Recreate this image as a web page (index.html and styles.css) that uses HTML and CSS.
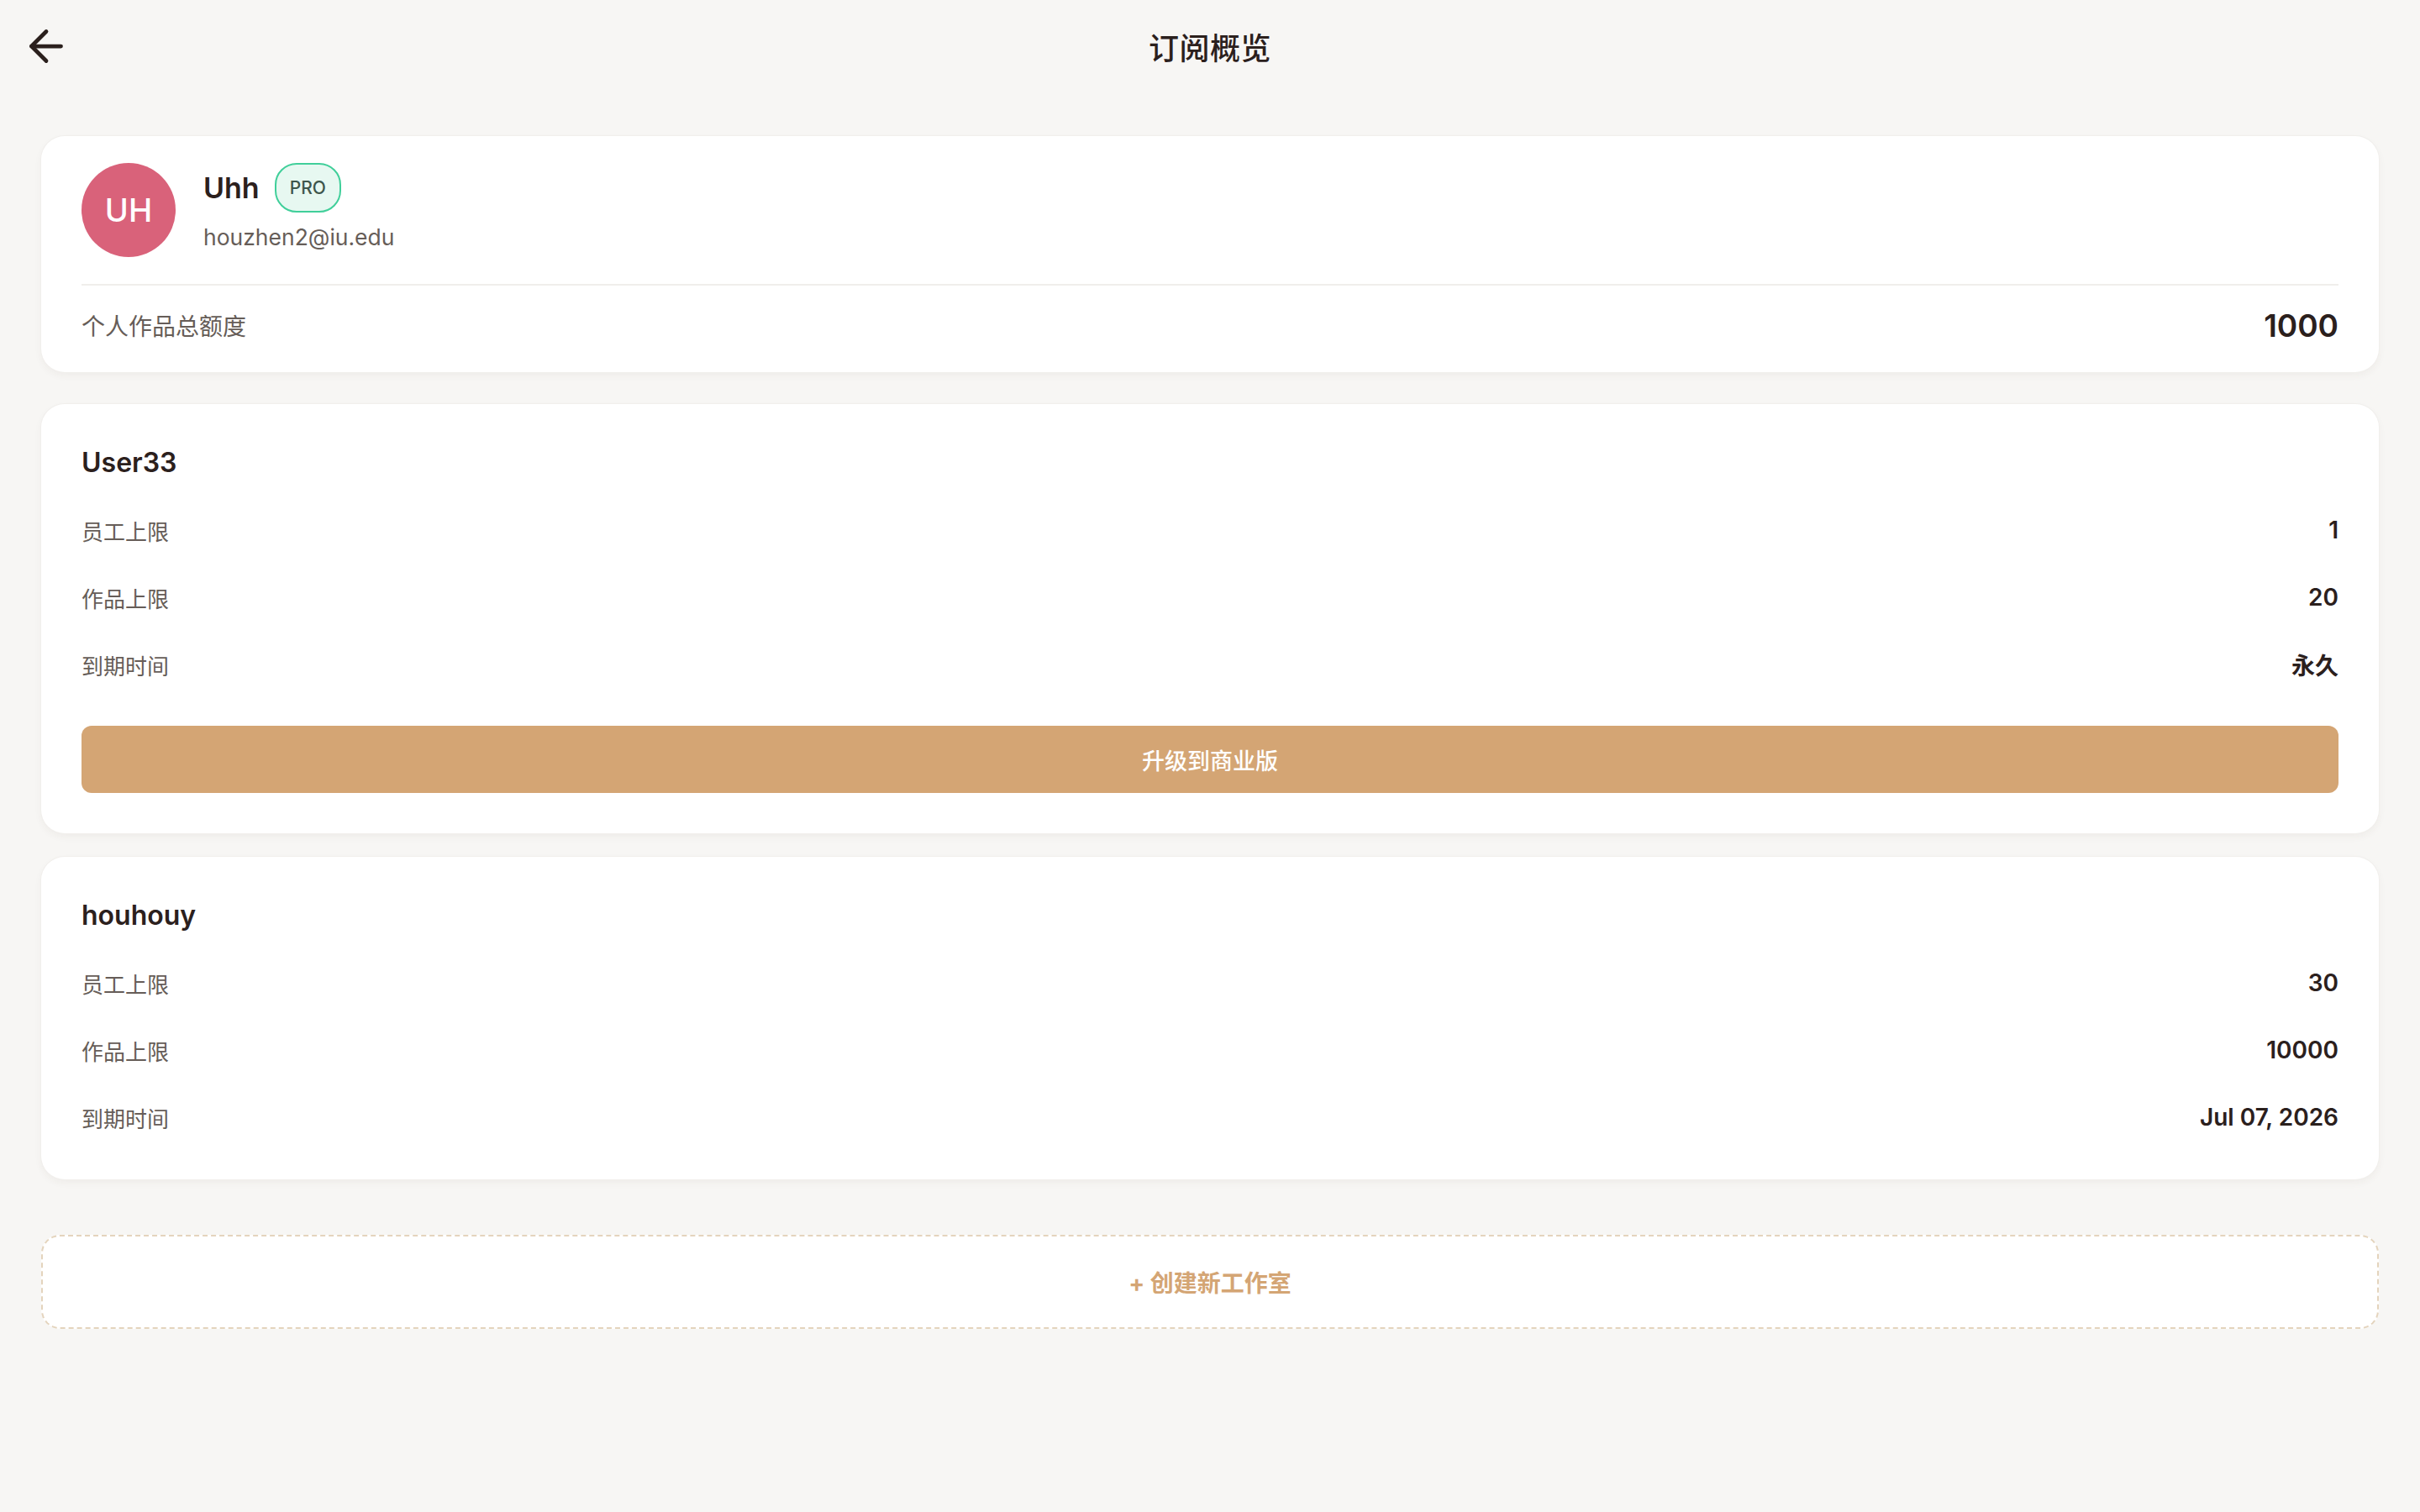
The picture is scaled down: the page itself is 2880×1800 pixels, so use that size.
FILE: index.html
```html
<html lang="zh-CN">
<head>
    <meta charset="UTF-8">
    <meta name="viewport" content="width=device-width, initial-scale=1.0">
    <title>订阅概览</title>
    <link rel="stylesheet" href="styles.css">
</head>
<body>

<header class="topbar">
    <a class="back-btn" href="#" aria-label="返回">
        <svg viewBox="0 0 24 24" width="60" height="60" fill="none" stroke="currentColor" stroke-width="1.9" stroke-linecap="round" stroke-linejoin="round">
            <path d="m12 19-7-7 7-7"/>
            <path d="M19 12H5"/>
        </svg>
    </a>
    <h1 class="page-title">订阅概览</h1>
    <div></div>
</header>

<main class="page">
    <!-- account card -->
    <section class="card card-account">
        <div class="profile">
            <div class="avatar">UH</div>
            <div class="profile-info">
                <div class="name-line">
                    <span class="name">Uhh</span>
                    <span class="badge-pro">PRO</span>
                </div>
                <div class="email">houzhen2@iu.edu</div>
            </div>
        </div>
        <div class="row total-row">
            <span class="label label-lg">个人作品总额度</span>
            <span class="value value-lg">1000</span>
        </div>
    </section>

    <!-- studio: User33 -->
    <section class="card card-studio">
        <h3 class="studio-name">User33</h3>
        <div class="rows">
            <div class="row"><span class="label">员工上限</span><span class="value">1</span></div>
            <div class="row"><span class="label">作品上限</span><span class="value">20</span></div>
            <div class="row"><span class="label">到期时间</span><span class="value">永久</span></div>
        </div>
        <button class="upgrade-btn">升级到商业版</button>
    </section>

    <!-- studio: houhouy -->
    <section class="card card-studio card-last">
        <h3 class="studio-name">houhouy</h3>
        <div class="rows">
            <div class="row"><span class="label">员工上限</span><span class="value">30</span></div>
            <div class="row"><span class="label">作品上限</span><span class="value">10000</span></div>
            <div class="row"><span class="label">到期时间</span><span class="value">Jul 07, 2026</span></div>
        </div>
    </section>

    <button class="create-btn">+ 创建新工作室</button>
</main>

</body>
</html>
```

FILE: styles.css
```css
body {
    margin: 0;
    background-color: #f7f6f4;
    color: #2b201d;
    font-family: Inter, "Noto Sans CJK SC", sans-serif;
}

.topbar {
    height: 110px;
    display: grid;
    grid-template-columns: 1fr auto 1fr;
    align-items: center;
    padding: 0 25px;
}

.back-btn {
    display: flex;
    width: 60px;
    height: 60px;
    color: #2b201d;
}

.page-title {
    margin: 0;
    font-size: 36px;
    font-weight: 500;
    letter-spacing: 0.5px;
    color: #2b201d;
}

.page {
    display: flex;
    flex-direction: column;
    padding: 52px 49px;
}

.card {
    background-color: #fff;
    border-radius: 28px;
    box-shadow: 0 0 0 1px #f1efec, 0 4px 10px rgba(70, 50, 30, 0.05);
    padding: 48px 48px;
}

.card-account {
    padding: 32px 48px 36px;
    margin-bottom: 38px;
}

.card-studio {
    margin-bottom: 28px;
}

.card-last {
    padding-bottom: 54px;
    margin-bottom: 66px;
}

/* profile */
.profile {
    display: flex;
    align-items: flex-start;
    gap: 33px;
    padding-bottom: 32px;
    border-bottom: 2px solid #f0eeeb;
}

.avatar {
    width: 112px;
    height: 112px;
    border-radius: 50%;
    background-color: #d9627a;
    color: #fff;
    display: flex;
    align-items: center;
    justify-content: center;
    font-size: 38px;
    font-weight: 500;
}

.profile-info {
    display: flex;
    flex-direction: column;
}

.name-line {
    display: flex;
    align-items: center;
    gap: 18px;
    height: 59px;
}

.name {
    font-size: 34px;
    font-weight: 600;
}

.badge-pro {
    box-sizing: border-box;
    height: 59px;
    padding: 0 16px;
    display: flex;
    align-items: center;
    border: 2px solid #40cf9a;
    border-radius: 26px;
    background-color: #e7f8f1;
    color: #3e564c;
    font-size: 21px;
    font-weight: 500;
}

.email {
    margin-top: 11px;
    font-size: 26.5px;
    line-height: 36px;
    color: #665d58;
}

/* rows */
.row {
    display: flex;
    justify-content: space-between;
    align-items: center;
    height: 40px;
}

.total-row {
    margin-top: 27px;
}

.rows {
    display: flex;
    flex-direction: column;
    gap: 40px;
    margin-top: 38px;
}

.label {
    font-size: 26px;
    color: #665d58;
}

.label-lg {
    font-size: 28px;
}

.value {
    font-size: 28px;
    font-weight: 600;
    color: #2b201d;
}

.value-lg {
    font-size: 37px;
}

.studio-name {
    margin: 0;
    height: 44px;
    line-height: 44px;
    font-size: 32px;
    font-weight: 600;
}

.upgrade-btn {
    display: block;
    width: 100%;
    height: 80px;
    margin-top: 53px;
    border: none;
    border-radius: 12px;
    background-color: #d4a574;
    color: #fff;
    font-family: inherit;
    font-size: 27px;
    font-weight: 500;
    cursor: pointer;
}

.create-btn {
    height: 112px;
    border: 2px dashed #e4d4bd;
    border-radius: 22px;
    background-color: #fff;
    color: #d4a574;
    font-family: inherit;
    font-size: 28px;
    font-weight: 700;
    cursor: pointer;
}
```
